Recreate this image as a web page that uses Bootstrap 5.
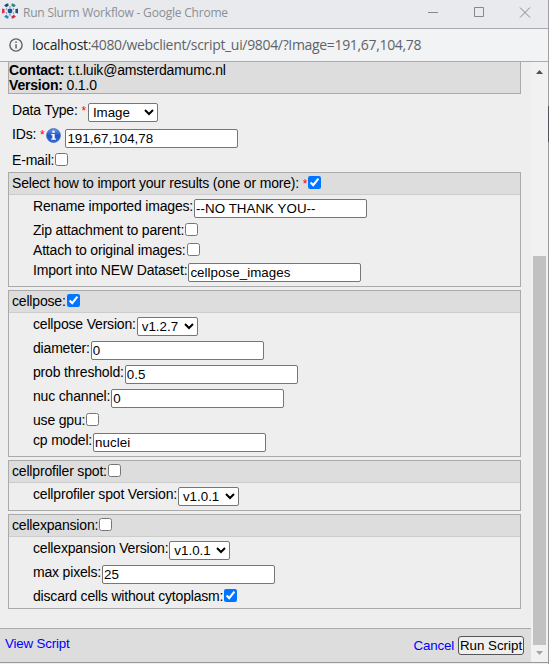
<!DOCTYPE html>
<html lang="en">
<head>
<meta charset="utf-8">
<title>Run Slurm Workflow</title>
<link href="https://cdn.jsdelivr.net/npm/bootstrap@5.3.0/dist/css/bootstrap.min.css" rel="stylesheet">
<style>
body{font:14px/16px "Liberation Sans",Arial,sans-serif;color:#000;background:#eee}
.win{width:549px;height:664px;background:linear-gradient(#a0a0a0 0 106px,#50545c 106px 142px,#999 142px) right/1px 100% no-repeat,#eee;padding-right:1px}
.titlebar{height:29px;background:#e8eaed;border-bottom:1px solid #a9abae;font:12px/16px "Open Sans","Noto Sans",sans-serif;letter-spacing:-.21px;color:#8d8f92;padding:0 17px 3px 2px}
.caption-text{margin-left:5px}
.address{height:33px;background:#f1f3f4;border-bottom:1px solid #a9abae;font:14px/18px "Open Sans","Noto Sans",sans-serif;letter-spacing:-.33px;color:#5f6368;padding:0 9px}
.url{margin-left:9px}
.page-area{height:601px;border-bottom:1px solid #999}
.form-area{width:531px}
.script-form{padding:0 10px 0 8px;letter-spacing:-.18px}
.info{height:32px;background:#ddd;border:1px solid #aaa;border-top:0;line-height:15px;padding-top:1px}
.top-fields{padding:7px 0 1px}
.section{border:1px solid #aaa;margin-bottom:3px;padding-bottom:1px}
.section-head{height:22px;background:#ddd;border-bottom:1px solid #ccc;padding:1px 3px 0;margin-bottom:2px}
.line{height:24px;padding-left:24px}
.line.tick{height:20px}
.top-fields .line{padding-left:4px}
.line>span,.section-head>span{white-space:pre;padding-top:1px}
.line input,.line select{margin:2px 0 0 1px}
input[type=text]{width:173px;height:19px;border:1px solid #767676;border-radius:2px;padding:0 1px;font:13.333px/16px "Liberation Sans",Arial,sans-serif;letter-spacing:.05px;color:#000;background:#fff}
select{height:19px;width:61px;border:1px solid #767676;border-radius:2px;font:13.333px/16px "Liberation Sans",Arial,sans-serif;color:#000;background:#fff;padding:0}
.dtype select{width:70px;margin-left:2px}
.line.ids{height:26px}
.ids svg{margin:3px 4px 0 2px}
.line.ids input{margin:4px 0 0}
input[type=checkbox]{width:13px;height:13px;margin:2px 0 0 1px;flex:none}
.req{color:#f00;font-size:12px}
.foot{height:34px;background:#ddd;border-top:1px solid #aaa;padding:0 7px 0 5px;font-size:13.333px}
.foot a{color:#00f;text-decoration:none;letter-spacing:-.18px}
.run{width:66px;height:19px;border:1px solid #555;border-radius:3px;background:#efefef;color:#000;padding:0;line-height:16px;font-size:13.333px;white-space:nowrap}
.scroll{width:17px;background:#f1f1f1;padding:8px 2px 7px}
.thumb{width:13px;height:389px;background:#c1c1c1;margin-bottom:6px}
</style>
<script src="https://cdn.jsdelivr.net/npm/bootstrap@5.3.0/dist/js/bootstrap.bundle.min.js"></script>
</head>
<body class="overflow-hidden">
<div class="win d-flex flex-column">
  <header class="titlebar d-flex align-items-center">
    <svg width="16" height="16" viewBox="0 0 16 16" class="flex-shrink-0 mb-1"><circle cx="8" cy="8" r="2.4" fill="#17569b"/><g fill="#1a4c85" opacity=".6"><circle cx="8" cy="4.1" r=".8"/><circle cx="8" cy="11.9" r=".8"/><circle cx="4.6" cy="6" r=".8"/><circle cx="11.4" cy="6" r=".8"/><circle cx="4.6" cy="10" r=".8"/><circle cx="11.4" cy="10" r=".8"/></g><g fill="none" stroke-width="2.8"><path d="M3.2 3.4Q4.5 1.9 6.4 1.6" stroke="#16517c"/><path d="M9.6 1.6Q11.5 1.9 12.8 3.4" stroke="#248c79"/><path d="M1.4 5.9Q.9 8 1.4 10.1" stroke="#e12e54"/><path d="M14.6 5.9Q15.1 8 14.6 10.1" stroke="#1b4e82"/><path d="M3.2 12.6Q4.5 14.1 6.4 14.4" stroke="#258abe"/><path d="M9.6 14.4Q11.5 14.1 12.8 12.6" stroke="#c72d45"/></g></svg>
    <span class="caption-text text-nowrap">Run Slurm Workflow - Google Chrome</span>
    <svg class="ms-auto" width="104" height="12" viewBox="0 0 104 12" fill="none" stroke="#85878a"><path d="M1 5.5H11M47.5 .5h9v9h-9zM93 .5l10 10M103 .5L93 10.5"/></svg>
  </header>
  <div class="address d-flex align-items-center">
    <svg width="14" height="14" viewBox="0 0 14 14" class="flex-shrink-0"><circle cx="7" cy="7" r="6.1" fill="none" stroke="#5f6368" stroke-width="1.4"/><path d="M6.3 6.2h1.5v4.2H6.3zM6.3 3.4h1.5v1.5H6.3z" fill="#5f6368"/></svg>
    <span class="url text-nowrap"><span class="text-dark">localhost</span>:4080/webclient/script_ui/9804/?Image=191,67,104,78</span>
  </div>
  <div class="page-area d-flex">
    <main class="form-area d-flex flex-column">
      <form class="script-form">
        <div class="info"><b>Contact:</b> t.t.luik@amsterdamumc.nl<br><b>Version:</b> 0.1.0</div>
        <div class="top-fields">
          <div class="line d-flex align-items-start dtype"><span>Data Type: <i class="req fst-normal">*</i></span><select><option>Image</option></select></div>
          <div class="line d-flex align-items-start ids"><span>IDs: <i class="req fst-normal">*</i></span>
            <svg class="flex-shrink-0" width="15" height="15" viewBox="0 0 15 15"><defs><linearGradient id="blueball" x2="0" y2="1"><stop stop-color="#6d9ce8"/><stop offset=".5" stop-color="#2155c8"/><stop offset="1" stop-color="#2c6be0"/></linearGradient></defs><circle cx="7.5" cy="7.5" r="6.9" fill="url(#blueball)" stroke="#3b62b5" stroke-width=".8"/><path d="M6.3 2.8h2.4v2H6.3zM5.2 6h3.5v4.6h1.2v1.2H5.2v-1.2h1.2V7.2H5.2z" fill="#fff"/></svg>
            <input type="text" value="191,67,104,78"></div>
          <div class="line tick d-flex align-items-start"><span>E-mail:</span><input type="checkbox"></div>
        </div>
        <section class="section">
          <div class="section-head d-flex align-items-start"><span>Select how to import your results (one or more): <i class="req fst-normal">*</i></span><input type="checkbox" checked></div>
          <div class="line d-flex align-items-start"><span>Rename imported images:</span><input type="text" value="--NO THANK YOU--"></div>
          <div class="line tick d-flex align-items-start"><span>Zip attachment to parent:</span><input type="checkbox"></div>
          <div class="line tick d-flex align-items-start"><span>Attach to original images:</span><input type="checkbox"></div>
          <div class="line d-flex align-items-start"><span>Import into NEW Dataset:</span><input type="text" value="cellpose_images"></div>
        </section>
        <section class="section">
          <div class="section-head d-flex align-items-start"><span>cellpose:</span><input type="checkbox" checked></div>
          <div class="line d-flex align-items-start"><span>cellpose Version:</span><select><option>v1.2.7</option></select></div>
          <div class="line d-flex align-items-start"><span>diameter:</span><input type="text" value="0"></div>
          <div class="line d-flex align-items-start"><span>prob threshold:</span><input type="text" value="0.5"></div>
          <div class="line d-flex align-items-start"><span>nuc channel:</span><input type="text" value="0"></div>
          <div class="line tick d-flex align-items-start"><span>use gpu:</span><input type="checkbox"></div>
          <div class="line d-flex align-items-start"><span>cp model:</span><input type="text" value="nuclei"></div>
        </section>
        <section class="section">
          <div class="section-head d-flex align-items-start"><span>cellprofiler spot:</span><input type="checkbox"></div>
          <div class="line d-flex align-items-start"><span>cellprofiler spot Version:</span><select><option>v1.0.1</option></select></div>
        </section>
        <section class="section">
          <div class="section-head d-flex align-items-start"><span>cellexpansion:</span><input type="checkbox"></div>
          <div class="line d-flex align-items-start"><span>cellexpansion Version:</span><select><option>v1.0.1</option></select></div>
          <div class="line d-flex align-items-start"><span>max pixels:</span><input type="text" value="25"></div>
          <div class="line tick d-flex align-items-start"><span>discard cells without cytoplasm:</span><input type="checkbox" checked></div>
        </section>
      </form>
      <footer class="foot d-flex align-items-center mt-auto"><a href="#" class="me-auto pb-1">View Script</a><a href="#" class="me-1">Cancel</a><button class="run">Run Script</button></footer>
    </main>
    <div class="scroll d-flex flex-column align-items-center">
      <svg width="7" height="4" viewBox="0 0 7 4"><path d="M3.5 0L7 4H0z" fill="#505050"/></svg>
      <div class="thumb mt-auto"></div>
      <svg width="7" height="4" viewBox="0 0 7 4"><path d="M0 0h7L3.5 4z" fill="#a3a3a3"/></svg>
    </div>
  </div>
</div>
</body>
</html>
